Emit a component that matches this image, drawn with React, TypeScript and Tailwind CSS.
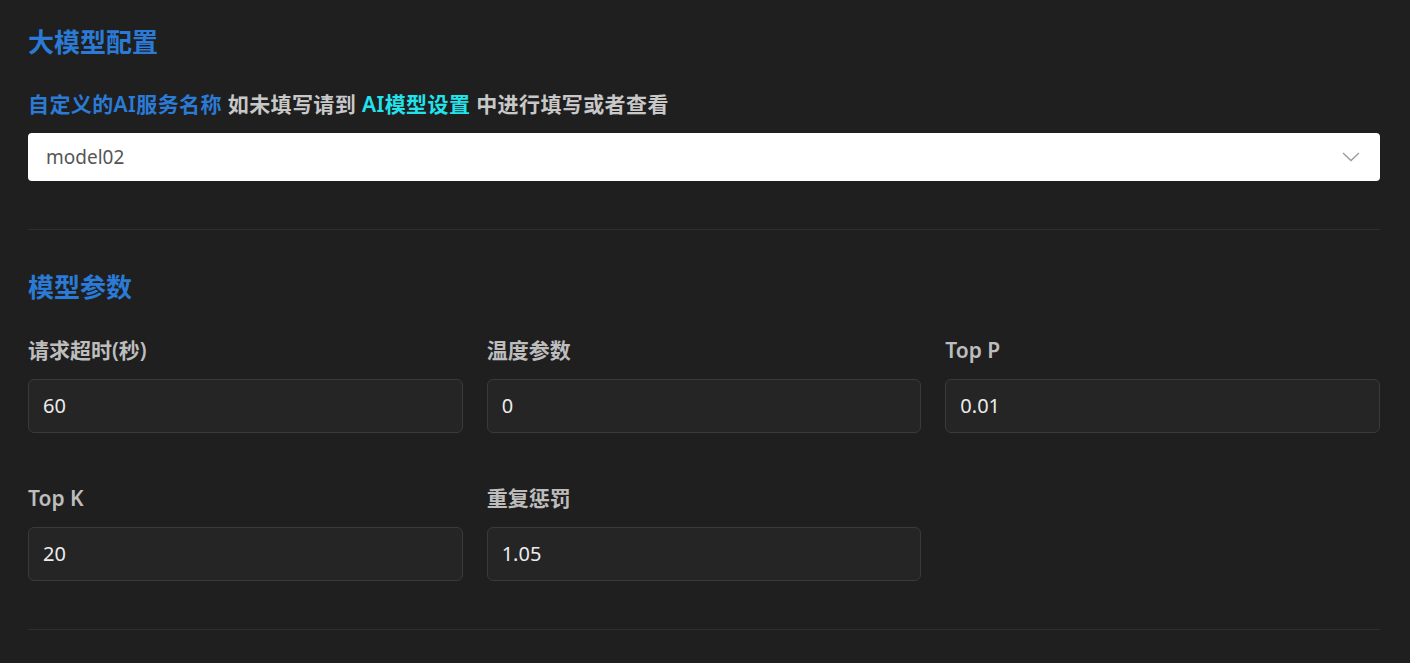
import React from "react";

const font = { fontFamily: '"Noto Sans", "Noto Sans CJK SC", sans-serif' };

function Field({ label, value }: { label: string; value: string }) {
  return (
    <div className="flex flex-col">
      <div className="text-[21px] leading-[28px] font-semibold text-[#bdbdbd]">{label}</div>
      <div className="mt-[15px] h-[54px] rounded-[6px] border border-[#3a3a3a] bg-[#252525] px-[14px] flex items-center text-[20px] text-[#ececec]">
        {value}
      </div>
    </div>
  );
}

export default function App() {
  return (
    <div className="min-h-screen w-full bg-[#1f1f1f]" style={font}>
      <div className="px-[28px] pt-[24px] pr-[30px]">
        <div className="text-[26px] leading-[36px] font-bold text-[#2b7bd6]">大模型配置</div>
        <div className="mt-[30px] text-[21px] leading-[28px] font-semibold text-[#c8c8c8] tracking-[0.4px]">
          <span className="text-[#2b7bd6]">自定义的AI服务名称</span> 如未填写请到{" "}
          <span className="text-[#22e3ec]">AI模型设置</span> 中进行填写或者查看
        </div>
        <div className="mt-[15px] h-[48px] rounded-[4px] bg-white flex items-center justify-between pl-[18px] pr-[20px]">
          <span className="text-[19px] text-[#555555]">model02</span>
          <svg width="18" height="10" viewBox="0 0 18 10" fill="none">
            <path d="M1 1L9 8.5L17 1" stroke="#9a9a9a" strokeWidth="1.3" />
          </svg>
        </div>
        <div className="mt-[48px] h-px bg-[#2f2f2f]" />
        <div className="mt-[39px] text-[26px] leading-[36px] font-bold text-[#2b7bd6]">模型参数</div>
        <div className="mt-[31px] grid grid-cols-3 gap-x-[24px] gap-y-[51px]">
          <Field label="请求超时(秒)" value="60" />
          <Field label="温度参数" value="0" />
          <Field label="Top P" value="0.01" />
          <Field label="Top K" value="20" />
          <Field label="重复惩罚" value="1.05" />
        </div>
        <div className="mt-[48px] h-px bg-[#2f2f2f]" />
      </div>
    </div>
  );
}
